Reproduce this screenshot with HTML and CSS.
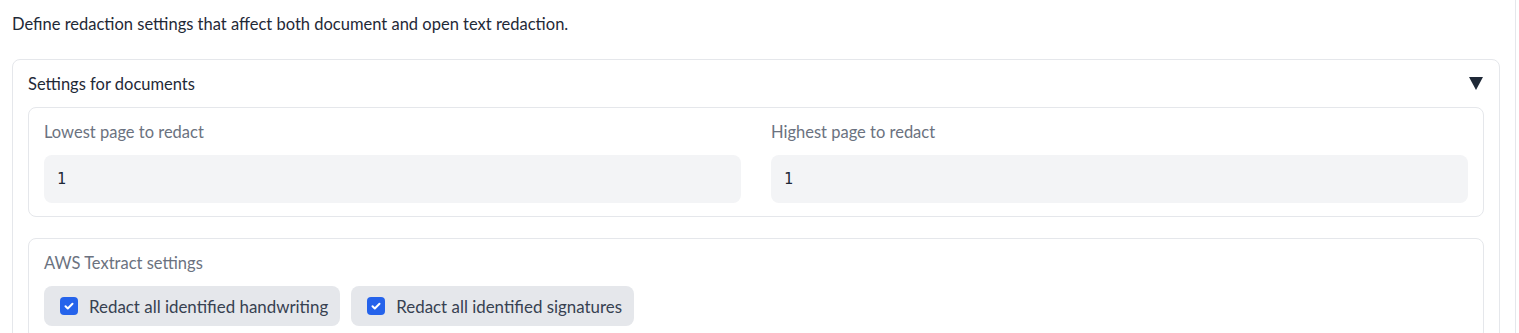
FILE: index.html
```html
<!DOCTYPE html>
<html lang="en">
<head>
    <meta charset="UTF-8">
    <meta name="viewport" content="width=device-width, initial-scale=1.0">
    <title>Redaction settings</title>
    <link rel="stylesheet" href="styles.css">
</head>
<body>
    <div class="page">
        <p class="intro">Define redaction settings that affect both document and open text redaction.</p>
        <div class="accordion">
            <div class="accordion-head">
                <span>Settings for documents</span>
                <svg class="arrow" width="14" height="13" viewBox="0 0 14 13"><path d="M0 0h14L7 13z" fill="#1f2937"/></svg>
            </div>
            <div class="group">
                <div class="row">
                    <label class="field">
                        <span class="field-label">Lowest page to redact</span>
                        <input class="num" type="number" value="1">
                    </label>
                    <label class="field">
                        <span class="field-label">Highest page to redact</span>
                        <input class="num" type="number" value="1">
                    </label>
                </div>
            </div>
            <div class="group">
                <span class="field-label">AWS Textract settings</span>
                <div class="checks">
                    <label class="check">
                        <span class="box"><svg width="12" height="12" viewBox="0 0 12 12"><path d="M2.5 6.2l2.3 2.3 4.7-4.8" fill="none" stroke="#fff" stroke-width="2" stroke-linecap="round" stroke-linejoin="round"/></svg></span>
                        Redact all identified handwriting
                    </label>
                    <label class="check">
                        <span class="box"><svg width="12" height="12" viewBox="0 0 12 12"><path d="M2.5 6.2l2.3 2.3 4.7-4.8" fill="none" stroke="#fff" stroke-width="2" stroke-linecap="round" stroke-linejoin="round"/></svg></span>
                        Redact all identified signatures
                    </label>
                </div>
            </div>
        </div>
    </div>
</body>
</html>
```

FILE: styles.css
```css
body {
    margin: 0;
    font-family: Lato, "Noto Sans", sans-serif;
    font-size: 16.5px;
    color: #1f2937;
    background: #fff;
    overflow: hidden;
}
.page {
    width: 1516px;
    height: 333px;
    border-right: 1px solid #e5e7eb;
    padding: 0 0 0 12px;
    box-sizing: border-box;
}
.intro {
    margin: 0;
    padding-top: 13px;
    line-height: 22px;
    height: 46px;
}
.accordion {
    width: 1488px;
    box-sizing: border-box;
    border: 1px solid #e5e7eb;
    border-radius: 8px;
    padding: 0 15px 16px;
}
.accordion-head {
    display: flex;
    justify-content: space-between;
    align-items: center;
    height: 47px;
}
.arrow {
    margin-right: 1px;
}
.group {
    border: 1px solid #e5e7eb;
    border-radius: 8px;
    padding: 12px 15px 13px;
    margin-bottom: 21px;
}
.row {
    display: grid;
    grid-template-columns: 1fr 1fr;
    gap: 30px;
}
.field {
    display: flex;
    flex-direction: column;
}
.field-label {
    display: block;
    color: #6b7280;
    line-height: 24px;
    margin-bottom: 11px;
}
.num {
    border: none;
    background: #f3f4f6;
    border-radius: 8px;
    height: 48px;
    padding: 0 13px;
    font-family: "DejaVu Sans Mono", monospace;
    font-size: 15px;
    color: #1f2937;
    outline: none;
    -moz-appearance: textfield;
}
.num::-webkit-inner-spin-button,
.num::-webkit-outer-spin-button {
    -webkit-appearance: none;
    margin: 0;
}
.checks {
    display: flex;
    gap: 11px;
}
.check {
    display: flex;
    align-items: center;
    gap: 11px;
    background: #e5e7eb;
    border-radius: 8px;
    height: 40px;
    padding: 0 12px 0 16px;
    color: #374151;
    font-size: 16.9px;
}
.box {
    width: 18px;
    height: 18px;
    border-radius: 4px;
    background: #2563eb;
    display: flex;
    align-items: center;
    justify-content: center;
}
```
